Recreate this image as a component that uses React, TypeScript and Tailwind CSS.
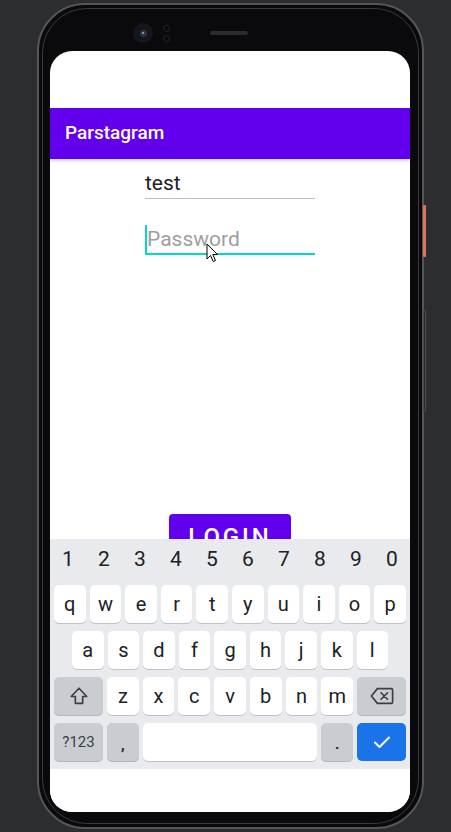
const row1 = ['q', 'w', 'e', 'r', 't', 'y', 'u', 'i', 'o', 'p']
const row2 = ['a', 's', 'd', 'f', 'g', 'h', 'j', 'k', 'l']
const row3 = ['z', 'x', 'c', 'v', 'b', 'n', 'm']
const digits = ['1', '2', '3', '4', '5', '6', '7', '8', '9', '0']

function Key({ label }: { label: string }) {
  return (
    <div className="flex-1 h-full rounded-[5px] bg-white shadow-[0_1px_0_#bfc2c7] flex items-center justify-center text-[20px] text-[#202124]">
      {label}
    </div>
  )
}

function ShiftIcon() {
  return (
    <svg width="22" height="22" viewBox="0 0 24 24" fill="none" stroke="#3c4043" strokeWidth="1.8" strokeLinejoin="round">
      <path d="M12 3.5 L3.5 12.5 H8 V20 H16 V12.5 H20.5 Z" />
    </svg>
  )
}

function BackspaceIcon() {
  return (
    <svg width="24" height="20" viewBox="0 0 26 20" fill="none" stroke="#3c4043" strokeWidth="1.8" strokeLinejoin="round" strokeLinecap="round">
      <path d="M8 2 H23 A1.5 1.5 0 0 1 24.5 3.5 V16.5 A1.5 1.5 0 0 1 23 18 H8 L1.5 10 Z" />
      <path d="M12 6.5 L19 13.5 M19 6.5 L12 13.5" />
    </svg>
  )
}

function Keyboard() {
  return (
    <div className="bg-[#e8eaed] pb-[8px] flex flex-col">
      <div className="h-[46px] pb-[4px] flex items-center">
        {digits.map((d) => (
          <div key={d} className="flex-1 text-center text-[21px] text-[#202124]">{d}</div>
        ))}
      </div>
      <div className="flex flex-col gap-[8px]">
        <div className="h-[38px] px-[4px] flex gap-[4px]">
          {row1.map((k) => <Key key={k} label={k} />)}
        </div>
        <div className="h-[38px] px-[22px] flex gap-[4px]">
          {row2.map((k) => <Key key={k} label={k} />)}
        </div>
        <div className="h-[38px] px-[4px] flex gap-[4px]">
          <div className="w-[49px] h-full rounded-[5px] bg-[#c9ccd1] shadow-[0_1px_0_#b3b6bb] flex items-center justify-center">
            <ShiftIcon />
          </div>
          {row3.map((k) => <Key key={k} label={k} />)}
          <div className="w-[49px] h-full rounded-[5px] bg-[#c9ccd1] shadow-[0_1px_0_#b3b6bb] flex items-center justify-center">
            <BackspaceIcon />
          </div>
        </div>
        <div className="h-[38px] px-[4px] flex gap-[4px]">
          <div className="w-[49px] h-full rounded-[5px] bg-[#c9ccd1] shadow-[0_1px_0_#b3b6bb] flex items-center justify-center text-[15px] text-[#3c4043]">
            ?123
          </div>
          <div className="w-[31.6px] h-full rounded-[5px] bg-[#c9ccd1] shadow-[0_1px_0_#b3b6bb] flex items-end justify-center pb-[5px] text-[15px] font-bold text-[#202124]">
            ,
          </div>
          <div className="flex-1 h-full rounded-[5px] bg-white shadow-[0_1px_0_#bfc2c7]" />
          <div className="w-[31.6px] h-full rounded-[5px] bg-[#c9ccd1] shadow-[0_1px_0_#b3b6bb] flex items-end justify-center pb-[6px] text-[15px] font-bold text-[#202124]">
            .
          </div>
          <div className="w-[49px] h-full rounded-[5px] bg-[#1a73e8] flex items-center justify-center">
            <svg width="20" height="16" viewBox="0 0 20 16" fill="none" stroke="white" strokeWidth="2" strokeLinecap="round" strokeLinejoin="round">
              <path d="M3 8.5 L7.5 13 L17 3.5" />
            </svg>
          </div>
        </div>
      </div>
    </div>
  )
}

export default function App() {
  return (
    <div className="relative w-[451px] h-[832px] overflow-hidden bg-[#2c2d2f] font-[Roboto,sans-serif] pt-[3px] pl-[37px]">
      <div className="w-[387px] h-[826px] rounded-[48px] bg-[#0a0a0c] border-2 border-[#55565a] p-[3px]">
        <div className="h-full rounded-[45px] border border-[#3a3b3f] flex flex-col">
          {/* camera + speaker */}
          <div className="h-[42px] pt-[6px] pl-[90px] flex items-center">
            <div className="w-[20px] h-[20px] rounded-full bg-[#15161b] flex items-center justify-center">
              <div className="w-[7px] h-[7px] rounded-full bg-[#2a3448] flex items-center justify-center">
                <div className="w-[2px] h-[2px] rounded-full bg-[#9fb0d0]" />
              </div>
            </div>
            <div className="ml-[10px] flex flex-col gap-[3px]">
              <div className="w-[7px] h-[7px] rounded-full border border-[#25262a]" />
              <div className="w-[7px] h-[7px] rounded-full border border-[#25262a]" />
            </div>
            <div className="ml-[40px] w-[38px] h-[4px] rounded-full bg-[#2a2b2f]" />
          </div>

          {/* screen */}
          <div className="ml-[7px] w-[360px] h-[761px] rounded-[22px] bg-white overflow-hidden flex flex-col">
            <div className="h-[57px]" />
            <div className="h-[51px] bg-[#6200ee] px-[15px] flex items-center shadow-[0_2px_3px_rgba(0,0,0,0.18)] relative z-10">
              <span className="text-white text-[19px] font-medium">Parstagram</span>
            </div>
            <div className="h-[380px] overflow-hidden flex flex-col items-center">
              <div className="w-[170px] mt-[10px] border-b border-[#bdbdbd] pb-[1px]">
                <div className="h-[28px] leading-[28px] text-[21px] text-[#212121]">test</div>
              </div>
              <div className="w-[170px] mt-[26px] border-b-2 border-[#03dac5] flex">
                <div className="w-[2px] h-[28px] bg-[#03dac5]" />
                <div className="h-[28px] leading-[28px] text-[21px] text-[#9e9e9e]">Password</div>
              </div>
              <div className="mt-[259px] w-[122px] h-[48px] shrink-0 rounded-[4px] bg-[#6200ee] flex items-start justify-center pt-[9px]">
                <span className="text-white text-[24px] font-medium tracking-[0.12em] leading-[28px]">LOGIN</span>
              </div>
            </div>
            <Keyboard />
            <div className="flex-1 bg-white" />
          </div>
        </div>
      </div>

      {/* side buttons */}
      <div className="absolute left-[423px] top-[205px] w-[3px] h-[52px] rounded-[1px] bg-[#e0735d]" />
      <div className="absolute left-[423px] top-[310px] w-[3px] h-[102px] rounded-[1px] border border-[#47484c]" />

      {/* mouse pointer */}
      <svg className="absolute left-[206px] top-[243px]" width="13" height="20" viewBox="0 0 13 20">
        <path d="M1 1 L1 16 L4.5 12.5 L7.2 18.5 L9.5 17.5 L6.8 11.6 L11.5 11.6 Z" fill="white" stroke="black" strokeWidth="1" strokeLinejoin="round" />
      </svg>
    </div>
  )
}
